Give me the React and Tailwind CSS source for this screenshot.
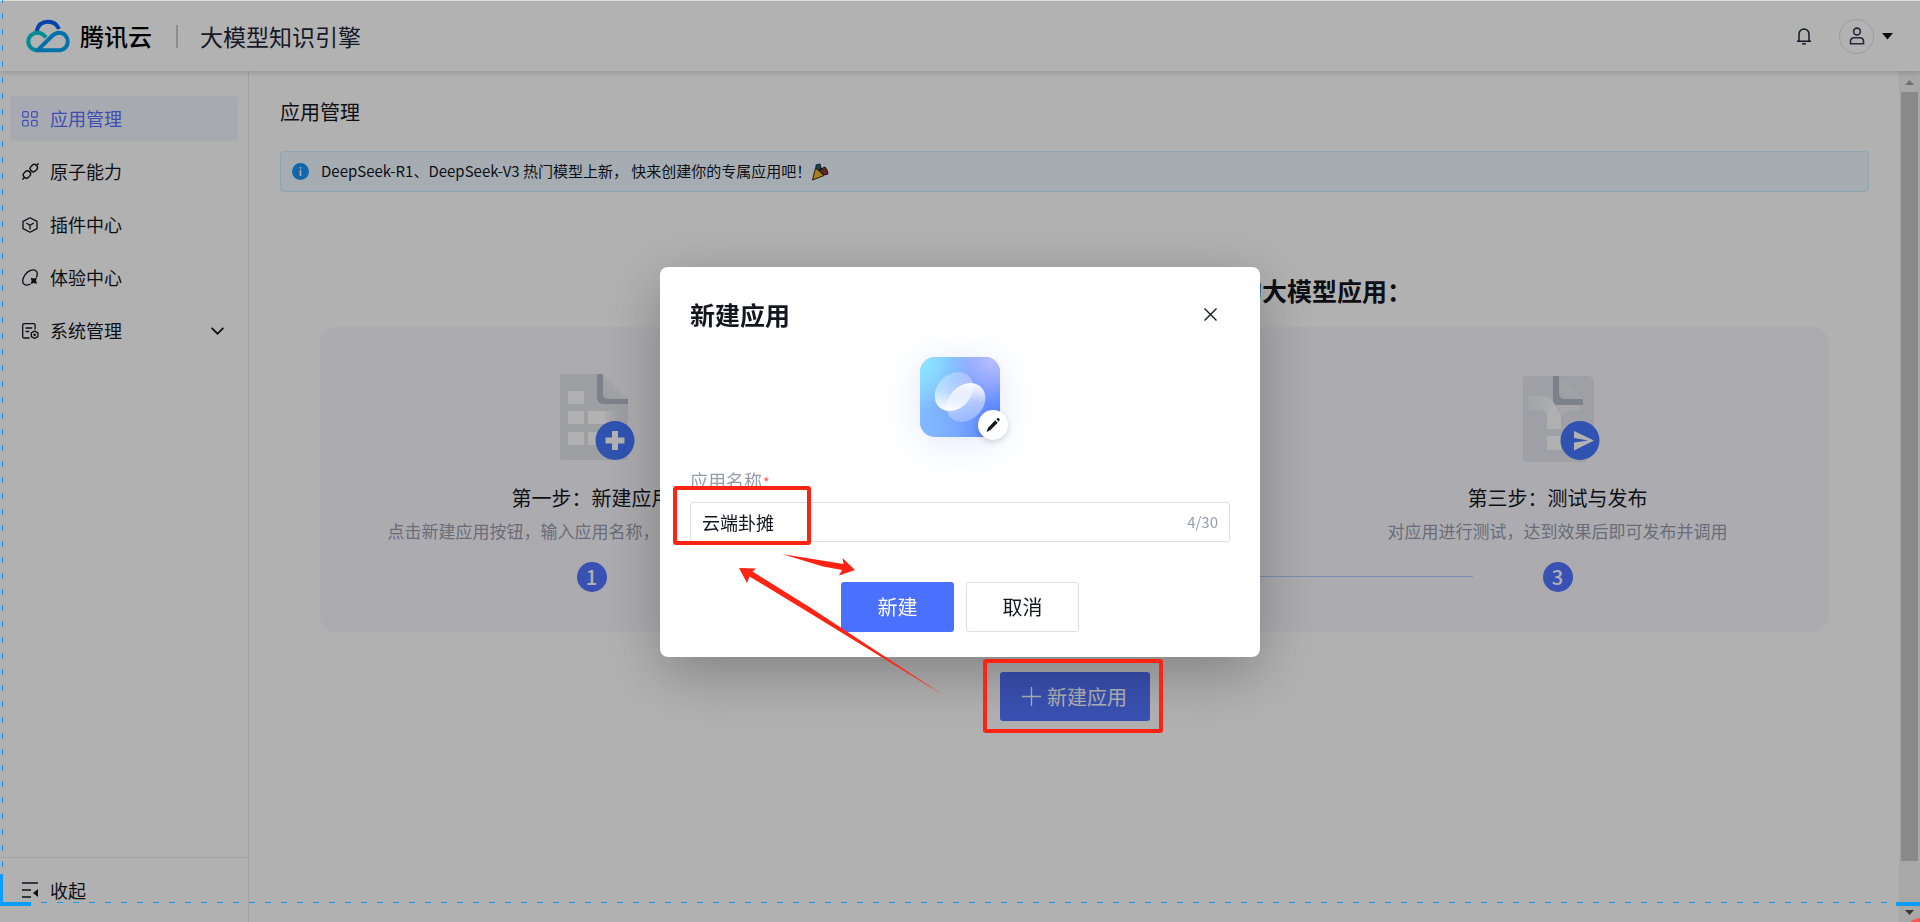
import React, { useState } from 'react';

const NAV_ITEMS = [
  { key: 'apps', label: '应用管理', icon: GridIcon, active: true },
  { key: 'atomic', label: '原子能力', icon: PlugIcon },
  { key: 'plugins', label: '插件中心', icon: CubeIcon },
  { key: 'playground', label: '体验中心', icon: OrbitIcon },
  { key: 'system', label: '系统管理', icon: DocGearIcon, expandable: true },
];

const STEPS = [
  { title: '第一步：新建应用', desc: '点击新建应用按钮，输入应用名称，即可成功创建应用', art: SheetArt },
  { title: '第二步：配置应用', desc: '配置模型与知识库', art: SheetArt },
  { title: '第三步：测试与发布', desc: '对应用进行测试，达到效果后即可发布并调用', art: PublishArt },
];

const MAX_NAME = 30;

function CloudLogo() {
  return (
    <svg width="44" height="34" viewBox="0 0 44 34" fill="none" strokeWidth="4">
      <path d="M10.5 12.5C12 6 16.500 2.800 22 2.800c5 0 9 2.600 11 7.200" stroke="#0a62f5" />
      <path d="M20 18.500c-2.300-2.800-5-4.700-8.500-4.700C6.500 13.800 2.300 17.500 2.300 22.500s3.900 8.700 9 8.700h2.500" stroke="#00cbd6" />
      <path d="M9.500 31.200h23.700c5 0 8.600-3.900 8.600-8.700s-3.800-8.700-8.600-8.700c-3 0-5 1-7.200 3.200L12.500 30.300" stroke="#08a2f5" />
    </svg>
  );
}

function BellIcon() {
  return (
    <svg width="16" height="18" viewBox="0 0 16 18" fill="none" stroke="#1c2233" strokeWidth="1.5">
      <path d="M1 14.200h14M3 14V7a5 5 0 0 1 10 0v7" />
      <path d="M6.200 16.800h3.600" />
    </svg>
  );
}

function UserIcon() {
  return (
    <svg width="16" height="18" viewBox="0 0 16 18" fill="none" stroke="#333b52" strokeWidth="1.6">
      <circle cx="8" cy="4.500" r="3.400" />
      <path d="M1.500 16.800v-2.500c0-2.400 1.600-3.500 4-3.500h5c2.400 0 4 1.100 4 3.500v2.500z" />
    </svg>
  );
}

function GridIcon() {
  return (
    <svg width="16" height="16" viewBox="0 0 16 16" fill="none" stroke="currentColor" strokeWidth="1.200">
      <rect x=".6" y=".6" width="5.600" height="5.600" rx="1.300" />
      <rect x="9.600" y=".6" width="5.600" height="5.600" rx="1.300" />
      <rect x=".6" y="9.400" width="5.600" height="5.600" rx="1.300" />
      <rect x="9.600" y="9.400" width="5.600" height="5.600" rx="1.300" />
    </svg>
  );
}

function PlugIcon() {
  return (
    <svg width="17" height="17" viewBox="0 0 17 17" fill="none" stroke="currentColor" strokeWidth="1.400">
      <path d="M.4 16.600l2.300-2.300M14.300 2.700L16.600.4" />
      <rect x="-3.100" y="-3.700" width="6.200" height="7.400" rx="2.900" transform="translate(4.900 11.500) rotate(45)" />
      <rect x="-3.100" y="-3.700" width="6.200" height="7.400" rx="2.900" transform="translate(11.800 5.100) rotate(45)" />
      <path d="M7 8.300l2.200 2" />
    </svg>
  );
}

function CubeIcon() {
  return (
    <svg width="16" height="16" viewBox="0 0 16 16" fill="none" stroke="currentColor" strokeWidth="1.300">
      <path d="M8 .7l7 3.700v7.200L8 15.300l-7-3.700V4.400z" strokeLinejoin="round" />
      <path d="M4.200 6L8 8.200 11.800 6M8 8.200v4.300" />
    </svg>
  );
}

function OrbitIcon() {
  return (
    <svg width="17" height="17" viewBox="0 0 17 17" fill="none" stroke="currentColor" strokeWidth="1.300">
      <path d="M8.200 15C5 17 .8 16.300.7 12.300.6 8.300 4.200 3 8.500 1.400c4-1.500 7.200.4 6.700 4.300-.1 1-.3 1.800-.8 2.700" />
      <path d="M8.600 8.700l3.200.9 3.100-1.100-.9 3.100 1 3.200-3.200-.9-3.100 1 .9-3.100z" fill="currentColor" stroke="none" />
    </svg>
  );
}

function DocGearIcon() {
  return (
    <svg width="17" height="16" viewBox="0 0 17 16" fill="none" stroke="currentColor" strokeWidth="1.300">
      <path d="M7.500 15H2a1.300 1.300 0 0 1-1.300-1.300V2A1.300 1.300 0 0 1 2 .7h9.800A1.300 1.300 0 0 1 13.100 2v4.500" />
      <path d="M3.500 5h6.700M3.500 8.500h3.700" />
      <path d="M12.600 8l3.300 1.900v3.600l-3.300 1.900-3.300-1.900V9.900z" />
      <circle cx="12.600" cy="11.700" r=".6" fill="currentColor" />
    </svg>
  );
}

function CollapseIcon() {
  return (
    <svg width="16" height="16" viewBox="0 0 16 16" fill="none" stroke="currentColor" strokeWidth="1.500">
      <path d="M0 1h16M0 8h9M0 15h9" />
      <path d="M16 7v8l-5-4z" fill="currentColor" stroke="none" />
    </svg>
  );
}

function PartyIcon() {
  return (
    <svg width="18" height="18" viewBox="0 0 18 18">
      <path d="M4.500 5L13 12.500 1.500 17z" fill="#f0b52e" stroke="#3b2a08" strokeWidth="1" strokeLinejoin="round" />
      <path d="M5 2l4-1 1 4-2 2-3-2z" fill="#1b6a7a" stroke="#20242c" strokeWidth="1" />
      <path d="M10 6l4-2 2 3 1 4-4 1-3-3z" fill="#8a3a34" stroke="#2b1512" strokeWidth="1" />
      <path d="M8 8.500l2.500-3" stroke="#2b1512" strokeWidth="1.200" />
    </svg>
  );
}

function SheetArt() {
  return (
    <svg width="100" height="100" viewBox="0 0 100 100">
      <defs>
        <linearGradient id="foldSheet" x1="0" y1="1" x2="1" y2="0">
          <stop offset="0" stopColor="#dfe1e6" />
          <stop offset="1" stopColor="#fafafc" />
        </linearGradient>
        <linearGradient id="cellFade" x1="0" x2="1">
          <stop offset=".5" stopColor="#fff" />
          <stop offset="1" stopColor="#e0e2e8" />
        </linearGradient>
      </defs>
      <path d="M21 7h35l30 25v58a3 3 0 0 1-3 3H21a3 3 0 0 1-3-3V10a3 3 0 0 1 3-3z" fill="#e2e4ea" />
      <path d="M55 7h6v20l25 5v5H61a6 6 0 0 1-6-6z" fill="#b4b9c6" />
      <path d="M61 7l25 25H66a5 5 0 0 1-5-5z" fill="url(#foldSheet)" />
      <path d="M26 24h16v13H26zM26 44h16v13H26zM26 65h16v13H26zM46 65h16v13H46z" fill="#fdfdfe" />
      <path d="M46 44h30v13H46z" fill="url(#cellFade)" />
      <circle cx="73" cy="73.500" r="19.500" fill="#4577ff" />
      <path d="M73 64v19M63.500 73.500h19" stroke="#fff" strokeWidth="6" />
    </svg>
  );
}

function PublishArt() {
  return (
    <svg width="100" height="100" viewBox="0 0 100 100">
      <defs>
        <linearGradient id="foldPublish" x1="0" y1="1" x2="1" y2="0">
          <stop offset="0" stopColor="#dfe1e6" />
          <stop offset="1" stopColor="#f4f5f8" />
        </linearGradient>
        <linearGradient id="armFade" x1="0" x2="1">
          <stop offset="0" stopColor="#e9ebef" />
          <stop offset="1" stopColor="#fbfbfd" />
        </linearGradient>
      </defs>
      <path d="M18 9h62a6 6 0 0 1 6 6v50L78 95H18a3 3 0 0 1-3-3V12a3 3 0 0 1 3-3z" fill="#e4e6ec" />
      <path d="M45 9h6l24 24v5H49a4 4 0 0 1-4-4z" fill="#b4b9c6" />
      <path d="M51 9l24 23H56a5 5 0 0 1-5-5z" fill="url(#foldPublish)" />
      <path d="M20 29h11c9 0 14 4 16 9-4 4-5 8-6 12-2-5-5-7-10-7H20z" fill="url(#armFade)" />
      <path d="M47 38h25v5h-6c-6 0-10 2-12 7-1-5-3-9-7-12z" fill="#eff0f4" />
      <path d="M39 62V51c0-5 3-9 7-13 4 4 7 9 7 14v10zM39 69h14v14H39z" fill="#fdfdfe" />
      <circle cx="72" cy="73.500" r="19.500" fill="#4577ff" />
      <path d="M66 64l20 9.500-20 10v-8l14-2-14-2.500z" fill="#fff" />
    </svg>
  );
}

function AppAvatar() {
  return (
    <svg width="80" height="80" viewBox="0 0 80 80" className="rounded-[15px] shadow-[0_6px_36px_rgba(90,130,255,0.18)]">
      <defs>
        <linearGradient id="avBase" x1="0" y1=".3" x2="1" y2=".7">
          <stop offset="0" stopColor="#8cc8ff" />
          <stop offset=".55" stopColor="#719aff" />
          <stop offset="1" stopColor="#5c86ff" />
        </linearGradient>
        <radialGradient id="avCyan" cx="0" cy=".08" r=".6">
          <stop offset="0" stopColor="#8ae6ff" />
          <stop offset="1" stopColor="#8ae6ff" stopOpacity="0" />
        </radialGradient>
        <radialGradient id="avPurple" cx=".95" cy="0" r=".6">
          <stop offset="0" stopColor="#c3c2ff" />
          <stop offset="1" stopColor="#c3c2ff" stopOpacity="0" />
        </radialGradient>
        <radialGradient id="avBottom" cx=".1" cy="1" r=".7">
          <stop offset="0" stopColor="#80b8ff" />
          <stop offset="1" stopColor="#80b8ff" stopOpacity="0" />
        </radialGradient>
        <linearGradient id="petalBack" x1="1" y1=".4" x2="0" y2=".6">
          <stop offset="0" stopColor="#fff" stopOpacity=".25" />
          <stop offset=".5" stopColor="#fff" stopOpacity=".5" />
          <stop offset="1" stopColor="#fff" />
        </linearGradient>
        <linearGradient id="petalFront" x1=".9" y1=".3" x2=".1" y2=".7">
          <stop offset="0" stopColor="#fff" stopOpacity=".75" />
          <stop offset="1" stopColor="#fff" stopOpacity=".4" />
        </linearGradient>
        <linearGradient id="petalFold" x1=".6" y1="0" x2=".5" y2="1">
          <stop offset="0" stopColor="#fff" stopOpacity=".95" />
          <stop offset=".45" stopColor="#fff" stopOpacity=".5" />
          <stop offset="1" stopColor="#fff" stopOpacity=".25" />
        </linearGradient>
        <linearGradient id="petalBackFold" x1=".5" y1="0" x2=".4" y2="1">
          <stop offset="0" stopColor="#fff" stopOpacity=".25" />
          <stop offset=".5" stopColor="#fff" stopOpacity=".45" />
          <stop offset="1" stopColor="#fff" />
        </linearGradient>
        <clipPath id="backShape">
          <ellipse cx="34" cy="34.500" rx="21.500" ry="17" transform="rotate(-45 34 34.500)" />
        </clipPath>
        <clipPath id="frontShape">
          <ellipse cx="46" cy="45.500" rx="21.500" ry="17" transform="rotate(-45 46 45.500)" />
        </clipPath>
      </defs>
      <rect width="80" height="80" fill="url(#avBase)" />
      <rect width="80" height="80" fill="url(#avBottom)" />
      <rect width="80" height="80" fill="url(#avPurple)" />
      <rect width="80" height="80" fill="url(#avCyan)" />
      <rect x="14" y="14" width="40" height="40" clipPath="url(#backShape)" fill="url(#petalBackFold)" />
      <rect x="26" y="26" width="40" height="40" clipPath="url(#frontShape)" fill="url(#petalFold)" />
    </svg>
  );
}

function Header() {
  return (
    <header className="relative z-10 flex h-[71px] items-center bg-white pl-[26px] pr-[27px] pt-px shadow-[0_2px_6px_rgba(0,0,0,0.14)]">
      <CloudLogo />
      <span className="ml-[10px] text-2xl font-medium text-black">腾讯云</span>
      <span className="ml-6 h-[23px] w-[2px] bg-[#c9cad0]"></span>
      <h1 className="ml-[22px] text-[23px] text-[#1f2638]">大模型知识引擎</h1>
      <div className="ml-auto flex items-center">
        <button type="button" aria-label="通知" className="mr-[27px]">
          <BellIcon />
        </button>
        <button type="button" aria-label="账号" className="flex items-center gap-2">
          <span className="flex h-[35px] w-[35px] items-center justify-center rounded-full border border-[#e0e1e5]">
            <UserIcon />
          </span>
          <svg width="11" height="7" viewBox="0 0 11 7">
            <path d="M0 0h11L5.500 6.500z" fill="#111" />
          </svg>
        </button>
      </div>
    </header>
  );
}

function Sidebar() {
  return (
    <aside className="flex w-[249px] shrink-0 flex-col border-r border-[#e6e7ec]">
      <nav className="flex flex-1 flex-col gap-2 px-[10px] pt-[25px]">
        {NAV_ITEMS.map(({ key, label, icon: Icon, active, expandable }) => (
          <a
            key={key}
            href={`#${key}`}
            className={`flex h-[45px] items-center rounded pl-3 pr-[14px] text-[18px] ${
              active ? 'bg-[#f1f4ff] text-[#5a6fff]' : 'text-[#14161e]'
            }`}
          >
            <span className="w-7 shrink-0">
              <Icon />
            </span>
            {label}
            {expandable && (
              <svg className="ml-auto" width="13" height="8" viewBox="0 0 13 8" fill="none" stroke="currentColor" strokeWidth="1.700">
                <path d="M.6.800l5.900 5.900L12.400.8" />
              </svg>
            )}
          </a>
        ))}
      </nav>
      <button type="button" className="flex h-[65px] items-center border-t border-[#ebebed] pl-[22px] text-left text-[18px] text-[#14161e]">
        <span className="w-7">
          <CollapseIcon />
        </span>
        收起
      </button>
    </aside>
  );
}

function StepCard() {
  return (
    <ol className="mx-10 mt-[18px] grid grid-cols-3 rounded-2xl bg-[#f7f7fc] px-[30px] pb-10 pt-10">
      {STEPS.map(({ title, desc, art: Art }, index) => (
        <li key={title} className="relative flex flex-col items-center">
          <Art />
          <h3 className="mt-4 whitespace-nowrap text-xl leading-[30px] text-[#14161e]">{title}</h3>
          <p className="mt-[3px] whitespace-nowrap text-[17px] leading-[30px] text-[#989bac]">{desc}</p>
          <span className="mt-4 flex h-[30px] w-[30px] items-center justify-center rounded-full bg-[#5274ff] text-xl font-medium text-white">
            {index + 1}
          </span>
          {index > 0 && (
            <span className="absolute bottom-[15px] right-1/2 mr-[85px] h-px w-[313px] bg-[#b0c8f8]"></span>
          )}
        </li>
      ))}
    </ol>
  );
}

function Scrollbar() {
  return (
    <div className="flex w-[21px] shrink-0 flex-col items-center bg-[#f1f1f1]">
      <svg className="h-[21px]" width="9" viewBox="0 0 9 21">
        <path d="M4.500 9L9 14H0z" fill="#a3a3a3" />
      </svg>
      <div className="mb-10 w-[17px] flex-1 bg-[#c4c4c5]"></div>
      <svg className="h-[21px]" width="9" viewBox="0 0 9 21">
        <path d="M0 9h9l-4.500 5z" fill="#505050" />
      </svg>
    </div>
  );
}

function Marks() {
  return (
    <svg
      className="pointer-events-none absolute left-0 top-0 overflow-visible"
      width="600"
      height="390"
      viewBox="0 0 600 390"
      fill="none"
      stroke="#ff2314"
      strokeWidth="4"
    >
      <rect x="15" y="221" width="134" height="55" rx="1" />
      <rect x="325" y="394" width="176" height="70" rx="1" />
      <path d="M122 287L183.500 297 182.500 291 195 303 179 308.500 182 303 163 299.500z" fill="#ff2314" stroke="none" />
      <path d="M284 428.500L148 345 89.500 309.500 87 316 79 301 96 301.500 92.500 304.500 151 341z" fill="#ff2314" stroke="none" />
    </svg>
  );
}

function CreateDialog() {
  const [name, setName] = useState('云端卦摊');

  return (
    <div className="fixed inset-0 z-20 flex items-center justify-center bg-black/30 pt-[2px]">
      <form
        role="dialog"
        aria-labelledby="dialog-title"
        className="relative w-[600px] rounded-lg bg-white px-[30px] pb-[25px] pt-[29px] shadow-[0_16px_60px_rgba(0,0,0,0.28)]"
        onSubmit={(e) => e.preventDefault()}
      >
        <div className="flex items-center justify-between pr-[13px]">
          <h2 id="dialog-title" className="text-[25px] font-bold leading-9 text-[#14161e]">新建应用</h2>
          <button type="button" aria-label="关闭">
            <svg width="13" height="13" viewBox="0 0 13 13" stroke="#14161e" strokeWidth="1.400">
              <path d="M.5.500l12 12M12.500.5l-12 12" />
            </svg>
          </button>
        </div>

        <div className="relative mx-auto mt-[25px] w-20">
          <AppAvatar />
          <button
            type="button"
            aria-label="编辑图标"
            className="absolute -bottom-[3px] -right-2 flex h-[30px] w-[30px] items-center justify-center rounded-full bg-white shadow-[0_2px_6px_rgba(0,0,0,0.16)]"
          >
            <svg width="14" height="14" viewBox="0 0 14 14" fill="#14161e">
              <path d="M9.300 2.300l2.400 2.400-7.200 7.400-4 1.800 1.600-4.200zM10.500 1.200l1.200-1.100c.9-.3 2.300 1.100 2 2l-1.100 1.300z" />
            </svg>
          </button>
        </div>

        <label htmlFor="app-name" className="mt-[29px] block text-[18px] leading-7 text-[#989bac]">
          应用名称<span className="ml-px text-sm text-[#ff5252]">*</span>
        </label>
        <div className="mt-2 flex h-10 items-center rounded-[3px] border border-[#dddfe6] px-[11px]">
          <input
            id="app-name"
            value={name}
            maxLength={MAX_NAME}
            onChange={(e) => setName(e.target.value)}
            className="min-w-0 flex-1 bg-transparent text-[18px] text-[#14161e] outline-none"
          />
          <span className="text-[15px] text-[#989bac]">{name.length}/{MAX_NAME}</span>
        </div>

        <div className="mt-10 flex justify-center gap-3">
          <button type="submit" className="h-[50px] w-[113px] rounded-[3px] bg-[#4a70ff] text-xl text-white">新建</button>
          <button type="button" className="h-[50px] w-[113px] rounded-[3px] border border-[#dddfe6] bg-white text-xl text-[#14161e]">取消</button>
        </div>
        <Marks />
      </form>
    </div>
  );
}

function CaptureFrame() {
  return (
    <div className="pointer-events-none fixed inset-0 z-30 overflow-hidden">
      <div className="h-px bg-[#dcdfd8]"></div>
      <div className="absolute bottom-[48px] left-[2px] top-0 w-px bg-[repeating-linear-gradient(to_bottom,#0a9cff_0_3px,transparent_3px_13px,#0a9cff_13px_16px)]"></div>
      <div className="absolute bottom-[19px] left-[41px] right-6 h-px bg-[repeating-linear-gradient(to_right,#0a9cff_0_6px,transparent_6px_16px)]"></div>
      <div className="absolute bottom-4 left-0 h-8 w-[31px] border-b-4 border-l-[3px] border-[#0a9cff]"></div>
      <div className="absolute bottom-4 right-0 h-1 w-6 bg-[#0a9cff]"></div>
      <div className="absolute -bottom-[26px] -right-4 h-[30px] w-[30px] rounded-full bg-[#ff5252]"></div>
    </div>
  );
}

export default function App() {
  return (
    <div className="flex min-h-screen flex-col bg-[#fefeff] font-['Noto_Sans_CJK_SC',sans-serif]">
      <Header />
      <div className="flex flex-1">
        <Sidebar />
        <main className="flex-1 pl-[31px] pr-[30px] pt-[25px] text-[#14161e]">
          <h2 className="text-xl leading-8">应用管理</h2>
          <div className="mt-[23px] flex h-[41px] items-center rounded border border-[#caeeff] bg-[#ecf8ff] pl-[11px] text-[15px]">
            <svg width="17" height="17" viewBox="0 0 17 17" className="mr-3">
              <circle cx="8.500" cy="8.500" r="8.500" fill="#1a94f5" />
              <path d="M8.500 7v6M8.500 4v1.700" stroke="#e8f6ff" strokeWidth="1.700" />
            </svg>
            <p>DeepSeek-R1、DeepSeek-V3 热门模型上新， 快来创建你的专属应用吧！</p>
            <PartyIcon />
          </div>
          <h2 className="mt-20 text-center text-[25px] font-bold leading-[37px]">
            欢迎使用大模型知识引擎，三步即可搭建专属的大模型应用：
          </h2>
          <StepCard />
          <div className="mt-10 flex justify-center">
            <button type="button" className="flex h-[49px] w-[150px] items-center justify-center gap-[6px] rounded-[3px] bg-[#5274ff] text-xl text-white">
              <svg width="19" height="19" viewBox="0 0 19 19" stroke="currentColor" strokeWidth="1.300">
                <path d="M9.500 0v19M0 9.500h19" />
              </svg>
              新建应用
            </button>
          </div>
        </main>
        <Scrollbar />
      </div>
      <CreateDialog />
      <CaptureFrame />
    </div>
  );
}
